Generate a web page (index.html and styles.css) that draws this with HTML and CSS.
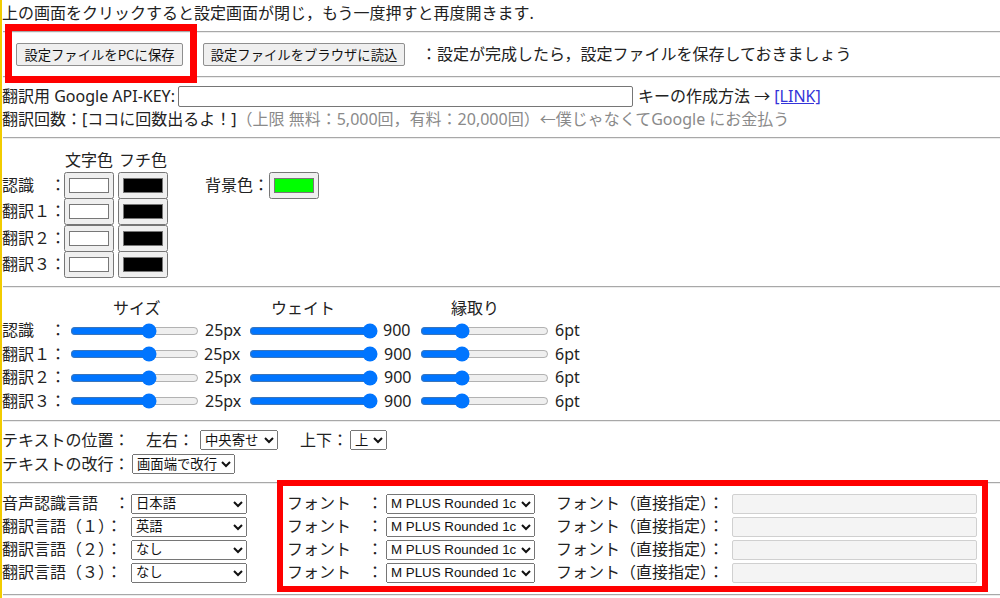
FILE: index.html
```html
<!DOCTYPE html>
<html lang="ja">
<head>
<meta charset="utf-8">
<title>設定</title>
<link rel="stylesheet" href="styles.css">
</head>
<body>
<div class="page">
  <div class="mark mark-save"></div>
  <div class="mark mark-font"></div>

  <p class="lead">上の画面をクリックすると設定画面が閉じ，もう一度押すと再度開きます.</p>
  <hr>

  <div class="sec sec-file">
    <button class="btn btn-save">設定ファイルをPCに保存</button>
    <button class="btn btn-load">設定ファイルをブラウザに読込</button>
    <span class="note">：設定が完成したら，設定ファイルを保存しておきましょう</span>
  </div>
  <hr>

  <div class="sec sec-api">
    <div class="row">
      <span class="api-label">翻訳用 Google API-KEY:</span>
      <input class="api-input" type="text">
      <span class="api-help">キーの作成方法 → <a class="link" href="#">[LINK]</a></span>
    </div>
    <div class="row">翻訳回数：[ココに回数出るよ！]<span class="muted">（上限 無料：5,000回，有料：20,000回）←僕じゃなくてGoogle にお金払う</span></div>
  </div>
  <hr>

  <div class="sec sec-color">
    <div class="color-grid">
      <span></span><span class="col-head">文字色</span><span class="col-head">フチ色</span>
      <span class="lbl">認識　：</span><input class="swatch" type="color" value="#ffffff"><input class="swatch" type="color" value="#000000">
      <span class="lbl">翻訳１：</span><input class="swatch" type="color" value="#ffffff"><input class="swatch" type="color" value="#000000">
      <span class="lbl">翻訳２：</span><input class="swatch" type="color" value="#ffffff"><input class="swatch" type="color" value="#000000">
      <span class="lbl">翻訳３：</span><input class="swatch" type="color" value="#ffffff"><input class="swatch" type="color" value="#000000">
    </div>
    <div class="bg-color"><span>背景色：</span><input class="swatch" type="color" value="#00ff00"></div>
  </div>
  <hr>

  <div class="sec sec-slider">
    <div class="slider-head"><span class="h-size">サイズ</span><span class="h-weight">ウェイト</span><span>縁取り</span></div>
    <div class="slider-grid">
      <span class="lbl">認識　：</span><input class="range" type="range" min="0" max="40" value="25"><span class="val">25px</span><input class="range" type="range" min="100" max="900" value="900"><span class="val">900</span><input class="range" type="range" min="0" max="20" value="6"><span class="val">6pt</span>
      <span class="lbl">翻訳１：</span><input class="range" type="range" min="0" max="40" value="25"><span class="val">25px</span><input class="range" type="range" min="100" max="900" value="900"><span class="val">900</span><input class="range" type="range" min="0" max="20" value="6"><span class="val">6pt</span>
      <span class="lbl">翻訳２：</span><input class="range" type="range" min="0" max="40" value="25"><span class="val">25px</span><input class="range" type="range" min="100" max="900" value="900"><span class="val">900</span><input class="range" type="range" min="0" max="20" value="6"><span class="val">6pt</span>
      <span class="lbl">翻訳３：</span><input class="range" type="range" min="0" max="40" value="25"><span class="val">25px</span><input class="range" type="range" min="100" max="900" value="900"><span class="val">900</span><input class="range" type="range" min="0" max="20" value="6"><span class="val">6pt</span>
    </div>
  </div>
  <hr>

  <div class="sec sec-pos">
    <div class="row">
      <span class="w128">テキストの位置：</span>
      <span class="lr">左右：</span>
      <select class="sel sel-align"><option>中央寄せ</option><option>左寄せ</option><option>右寄せ</option></select>
      <span class="ud">上下：</span>
      <select class="sel sel-v"><option>上</option><option>下</option></select>
    </div>
    <div class="row">
      <span class="w128">テキストの改行：</span>
      <select class="sel sel-wrap"><option>画面端で改行</option><option>改行しない</option></select>
    </div>
  </div>
  <hr>

  <div class="sec sec-lang">
    <div class="row">
      <span class="w-lang">音声認識言語　：</span>
      <select class="sel sel-lang"><option>日本語</option><option>英語</option></select>
      <span class="w-font">フォント　：</span>
      <select class="sel sel-font"><option>M PLUS Rounded 1c</option></select>
      <span class="w-direct">フォント（直接指定）：</span>
      <input class="direct" type="text" disabled>
    </div>
    <div class="row">
      <span class="w-lang">翻訳言語（１）：</span>
      <select class="sel sel-lang"><option>英語</option><option>日本語</option></select>
      <span class="w-font">フォント　：</span>
      <select class="sel sel-font"><option>M PLUS Rounded 1c</option></select>
      <span class="w-direct">フォント（直接指定）：</span>
      <input class="direct" type="text" disabled>
    </div>
    <div class="row">
      <span class="w-lang">翻訳言語（２）：</span>
      <select class="sel sel-lang"><option>なし</option><option>英語</option></select>
      <span class="w-font">フォント　：</span>
      <select class="sel sel-font"><option>M PLUS Rounded 1c</option></select>
      <span class="w-direct">フォント（直接指定）：</span>
      <input class="direct" type="text" disabled>
    </div>
    <div class="row">
      <span class="w-lang">翻訳言語（３）：</span>
      <select class="sel sel-lang"><option>なし</option><option>英語</option></select>
      <span class="w-font">フォント　：</span>
      <select class="sel sel-font"><option>M PLUS Rounded 1c</option></select>
      <span class="w-direct">フォント（直接指定）：</span>
      <input class="direct" type="text" disabled>
    </div>
  </div>
  <hr>
</div>
</body>
</html>
```

FILE: styles.css
```css
html, body {
  margin: 0;
  padding: 0;
  background: #ffffff;
}

body {
  font-family: "Noto Sans", "Noto Sans CJK JP", sans-serif;
  font-size: 16px;
  line-height: 23px;
  color: #222222;
  overflow: hidden;
}

.page {
  position: relative;
  border-left: 2px solid #f2cc00;
  min-height: 598px;
}

hr {
  margin: 0 0 0 1px;
  height: 0;
  border: 0;
  border-top: 1px solid #a8a8a8;
  border-bottom: 1px solid #ececec;
}

.mark {
  position: absolute;
  box-sizing: border-box;
  border: 7px solid #ff0000;
  pointer-events: none;
  z-index: 5;
}

.mark-save {
  left: 3px;
  top: 24px;
  width: 192px;
  height: 59px;
}

.mark-font {
  left: 275px;
  top: 480px;
  width: 711px;
  height: 112px;
  border-width: 6px;
}

.lead {
  margin: 0;
  padding-top: 2px;
  height: 31px;
  box-sizing: border-box;
  white-space: nowrap;
}

.row {
  display: flex;
  align-items: center;
  white-space: nowrap;
}

.row > * {
  flex-shrink: 0;
}

/* file buttons */
.sec-file {
  height: 43px;
  display: flex;
  align-items: center;
  white-space: nowrap;
}

.btn {
  font-family: "Noto Sans CJK JP", "Liberation Sans", sans-serif;
  font-size: 13.33px;
  height: 23px;
  padding: 0 6px;
  line-height: 19px;
  color: #111;
  background: #efefef;
  border: 1px solid #8f8f8f;
  border-radius: 2px;
}

.btn-save {
  margin-left: 14px;
  width: 167px;
}

.btn-load {
  margin-left: 20px;
  width: 202px;
}

.note {
  margin-left: 16px;
}

/* api */
.sec-api {
  padding: 7px 0 6px;
}

.sec-api .row {
  height: 23px;
}

.api-label {
  width: 176px;
}

.api-input {
  width: 455px;
  height: 21px;
  box-sizing: border-box;
  border: 1px solid #767676;
  border-radius: 2px;
  padding: 1px 2px;
  font-size: 13.33px;
  background: #fff;
}

.api-help {
  margin-left: 5px;
}

.link {
  color: #3434d8;
  text-decoration: underline;
}

.muted {
  color: #8a8a8a;
}

/* colors */
.sec-color {
  display: flex;
  align-items: flex-start;
  padding: 10px 0 8px;
}

.color-grid {
  display: grid;
  grid-template-columns: 58px 50px 50px;
  grid-template-rows: 23px repeat(4, 26.5px);
  column-gap: 4px;
  align-items: center;
}

.col-head {
  text-align: center;
  white-space: nowrap;
}

.lbl {
  white-space: nowrap;
}

.swatch {
  width: 50px;
  height: 27px;
  margin: 0;
  padding: 1px 2px;
  box-sizing: border-box;
}

.bg-color {
  margin-left: 37px;
  margin-top: 23px;
  height: 26.5px;
  display: flex;
  align-items: center;
  white-space: nowrap;
}

/* sliders */
.sec-slider {
  padding: 9px 0 7px;
}

.slider-head {
  display: flex;
  height: 22px;
  line-height: 22px;
  padding-left: 111px;
  white-space: nowrap;
}

.h-size {
  width: 158px;
}

.h-weight {
  width: 180px;
}

.slider-grid {
  display: grid;
  grid-template-columns: 68px 129px 50px 129px 42px 129px auto;
  grid-auto-rows: 23.5px;
  align-items: center;
}

.range {
  width: 129px;
  margin: 0;
}

.val {
  padding-left: 6px;
  white-space: nowrap;
}

.slider-grid .val:nth-child(5n) {
  padding-left: 5px;
}

/* selects */
.sel {
  font-family: "Liberation Sans", "Noto Sans CJK JP", sans-serif;
  font-size: 13.33px;
  height: 20px;
  box-sizing: border-box;
  margin: 0;
  color: #111;
}

/* position */
.sec-pos {
  padding: 6px 0;
}

.sec-pos .row {
  height: 24px;
}

.w128 {
  width: 128px;
}

.lr {
  margin-left: 16px;
  width: 48px;
}

.sel-align {
  margin-left: 6px;
  width: 78px;
}

.ud {
  margin-left: 22px;
  width: 48px;
}

.sel-v {
  margin-left: 2px;
  width: 37px;
}

.sel-wrap {
  margin-left: 2px;
  width: 103px;
}

/* language */
.sec-lang {
  padding: 8px 0 10px;
}

.sec-lang .row {
  height: 23px;
}

.w-lang {
  width: 129px;
}

.sel-lang {
  width: 116px;
}

.w-font {
  margin-left: 40px;
  width: 99px;
}

.sel-font {
  width: 149px;
}

.w-direct {
  margin-left: 21px;
  width: 176px;
}

.direct {
  width: 245px;
  height: 20px;
  box-sizing: border-box;
  border: 1px solid #d0d0d0;
  border-radius: 2px;
  background: #f4f4f4;
  margin: 0;
}
```
